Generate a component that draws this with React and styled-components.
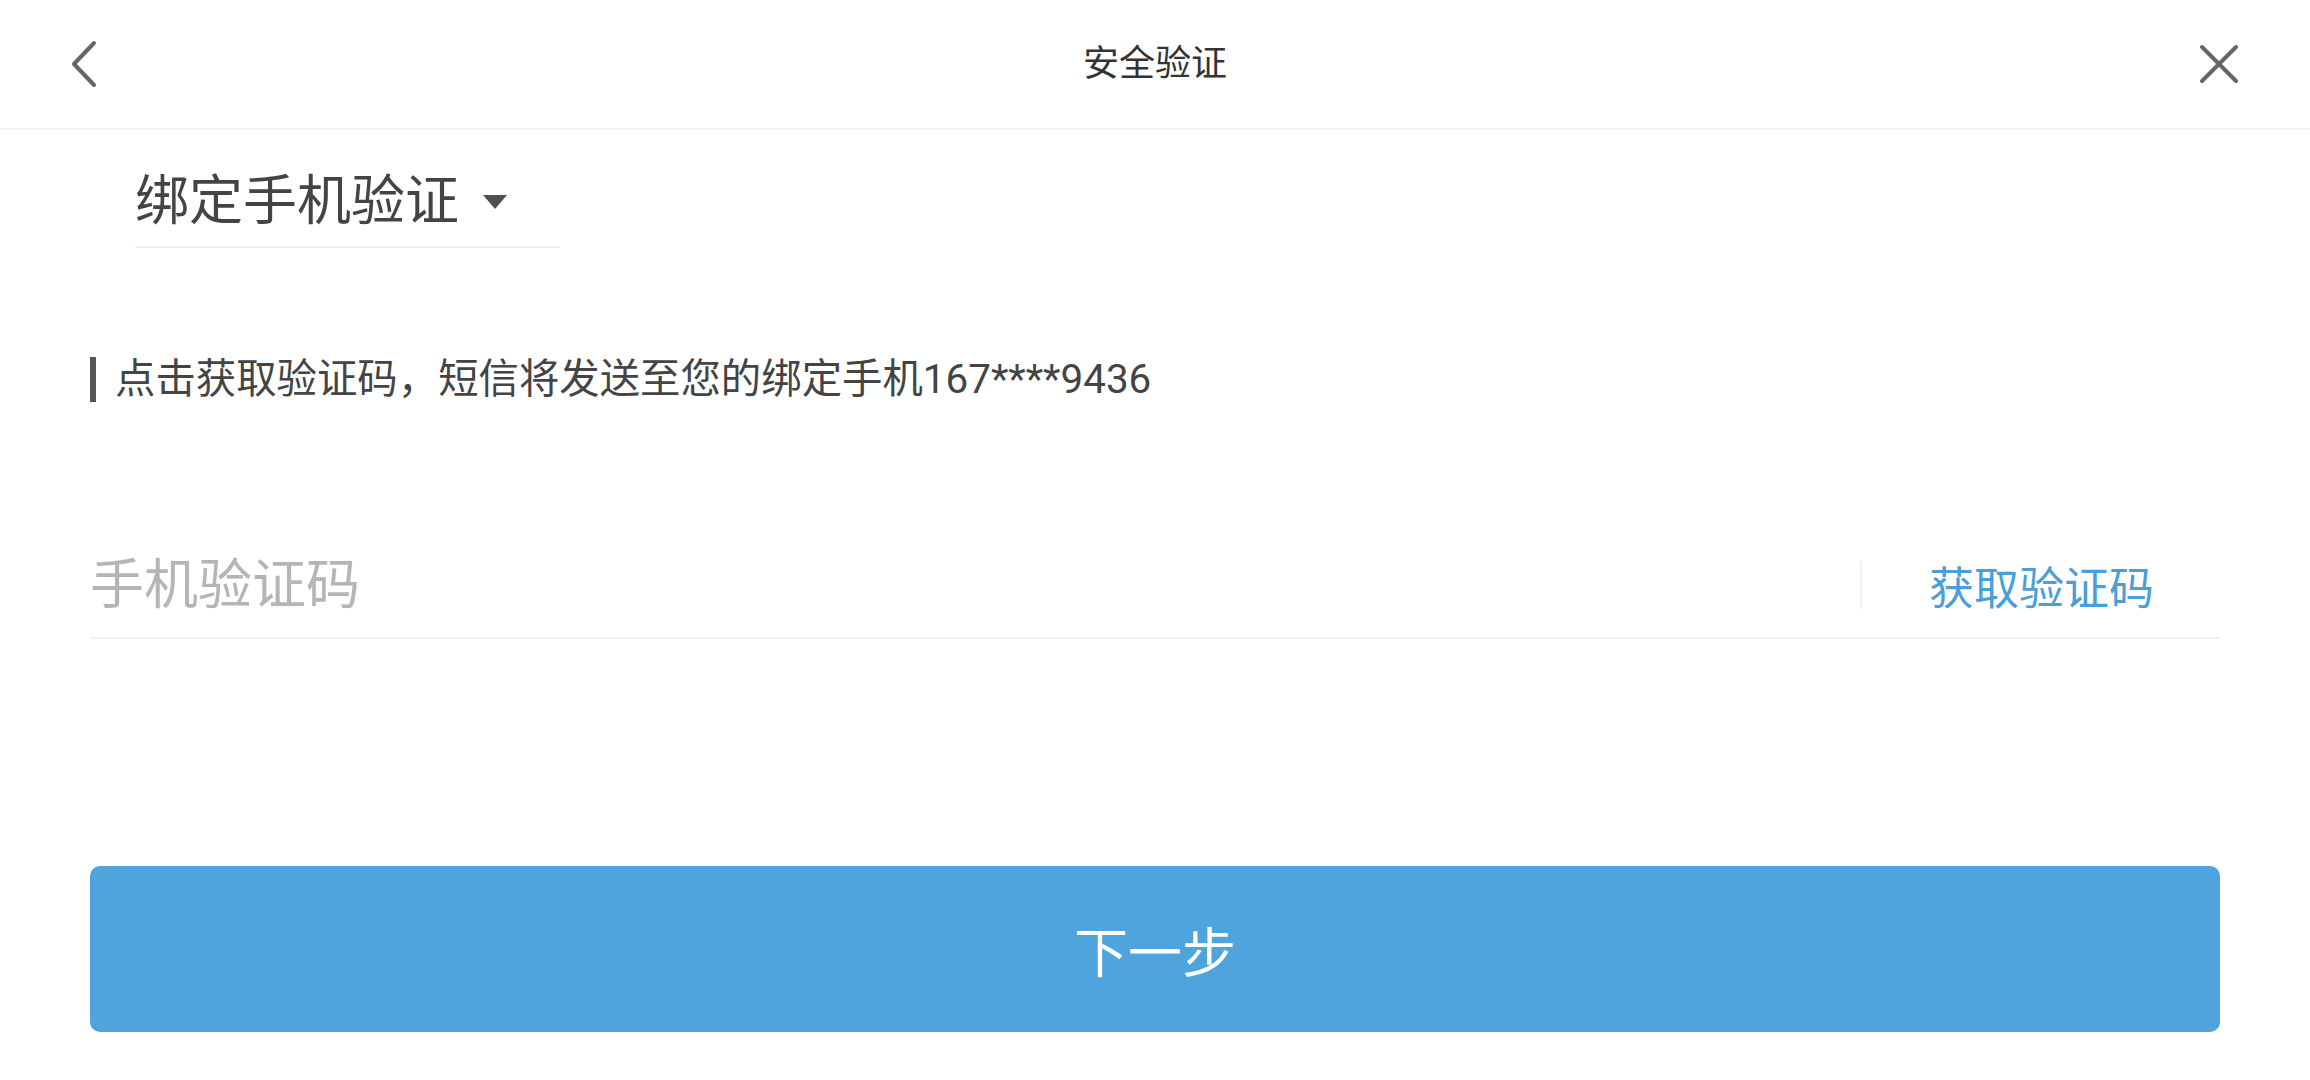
import React from 'react';
import styled, { createGlobalStyle } from 'styled-components';

const GlobalStyle = createGlobalStyle`
  html, body {
    margin: 0;
    padding: 0;
    background: #ffffff;
  }
  body {
    font-family: Roboto, "Noto Sans CJK SC", sans-serif;
    color: #333;
  }
`;

const Page = styled.div`
  width: 2310px;
  height: 1080px;
  background: #fff;
  overflow: hidden;
`;

const Header = styled.header`
  height: 128px;
  border-bottom: 2px solid #f1f1f1;
  display: grid;
  grid-template-columns: 1fr auto 1fr;
  align-items: center;
  padding: 0 71px;
`;

const IconButton = styled.div`
  display: flex;
  align-items: center;
  justify-content: ${p => (p.side === 'right' ? 'flex-end' : 'flex-start')};
`;

const Title = styled.h1`
  margin: 0;
  font-size: 36px;
  font-weight: 400;
  color: #333;
  line-height: 1;
`;

const Body = styled.main`
  padding: 0 90px;
  display: flex;
  flex-direction: column;
`;

const Dropdown = styled.div`
  align-self: flex-start;
  margin: 40px 0 0 45px;
  width: 425px;
  padding-bottom: 12px;
  border-bottom: 2px solid #f0f0f0;
  display: flex;
  align-items: center;
  gap: 24px;
`;

const DropdownLabel = styled.span`
  font-size: 54px;
  line-height: 64px;
  color: #444;
`;

const Hint = styled.p`
  margin: 109px 0 0;
  display: flex;
  align-items: center;
  gap: 19px;
  font-size: 40.4px;
  line-height: 44px;
  color: #444;

  &::before {
    content: '';
    width: 6px;
    height: 45px;
    background: #555;
  }
`;

const InputRow = styled.div`
  margin-top: 131px;
  height: 104px;
  border-bottom: 2px solid #f0f0f0;
  display: flex;
  align-items: center;
  padding-right: 66px;
`;

const CodeInput = styled.input`
  flex: 1;
  border: none;
  outline: none;
  padding: 0;
  background: transparent;
  font-family: inherit;
  font-size: 54px;
  color: #333;

  &::placeholder {
    color: #b5b5b5;
  }
`;

const Divider = styled.span`
  width: 2px;
  height: 48px;
  background: #f0f0f0;
  margin-right: 67px;
`;

const GetCode = styled.button`
  border: none;
  background: none;
  padding: 0;
  font-family: inherit;
  font-size: 45px;
  color: #4a9fd9;
  cursor: pointer;
`;

const NextButton = styled.button`
  margin-top: 227px;
  height: 166px;
  border: none;
  border-radius: 10px;
  background: #4fa4dd;
  color: #fff;
  font-family: inherit;
  font-size: 54px;
  cursor: pointer;
`;

const BackIcon = () => (
  <svg width="26" height="48" viewBox="0 0 26 48" fill="none">
    <path d="M23 3 L3 24 L23 45" stroke="#666" strokeWidth="4" strokeLinecap="round" strokeLinejoin="round" />
  </svg>
);

const CloseIcon = () => (
  <svg width="40" height="40" viewBox="0 0 40 40" fill="none">
    <path d="M3 3 L37 37 M37 3 L3 37" stroke="#666" strokeWidth="4" strokeLinecap="round" />
  </svg>
);

const Caret = () => (
  <svg width="24" height="16" viewBox="0 0 24 16">
    <path d="M0 1 L24 1 L12 15 Z" fill="#505050" />
  </svg>
);

export default function App() {
  return (
    <>
      <GlobalStyle />
      <Page>
        <Header>
          <IconButton side="left"><BackIcon /></IconButton>
          <Title>安全验证</Title>
          <IconButton side="right"><CloseIcon /></IconButton>
        </Header>
        <Body>
          <Dropdown>
            <DropdownLabel>绑定手机验证</DropdownLabel>
            <Caret />
          </Dropdown>
          <Hint>点击获取验证码，短信将发送至您的绑定手机167****9436</Hint>
          <InputRow>
            <CodeInput placeholder="手机验证码" />
            <Divider />
            <GetCode>获取验证码</GetCode>
          </InputRow>
          <NextButton>下一步</NextButton>
        </Body>
      </Page>
    </>
  );
}
